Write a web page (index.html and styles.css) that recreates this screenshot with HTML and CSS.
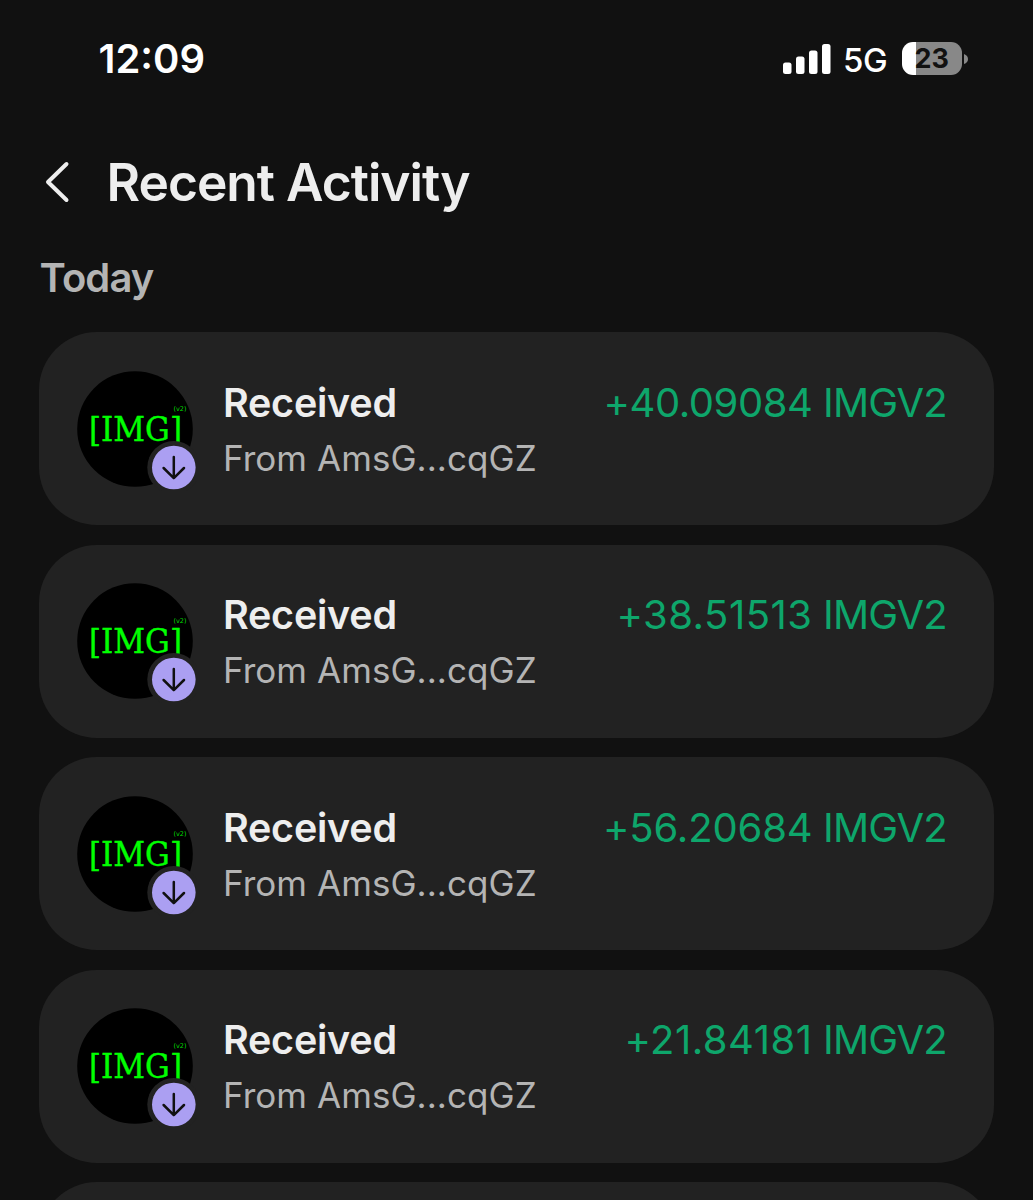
FILE: index.html
```html
<!DOCTYPE html>
<html lang="en">
<head>
<meta charset="utf-8">
<title>Recent Activity</title>
<link rel="stylesheet" href="styles.css">
</head>
<body>
<header class="status">
  <span class="time">12:09</span>
  <div class="indicators">
    <svg class="signal" width="48" height="30" viewBox="0 0 48 30" fill="#fff">
      <rect x="0" y="18.5" width="8.5" height="11.5" rx="2.5"/>
      <rect x="13" y="12.5" width="8.5" height="17.5" rx="2.5"/>
      <rect x="26" y="6.5" width="8.5" height="23.5" rx="2.5"/>
      <rect x="39" y="0" width="8.5" height="30" rx="2.5"/>
    </svg>
    <span class="network">5G</span>
    <div class="battery"><span class="level">23</span></div>
    <svg class="tip" width="4" height="10" viewBox="0 0 4 10"><path d="M0 0Q4 1.500 4 5T0 10Z" fill="#888"/></svg>
  </div>
</header>
<div class="heading">
  <svg class="back" width="26" height="42" viewBox="0 0 26 42"><path d="M22.500 3L4 21l18.500 18" fill="none" stroke="#eee" stroke-width="4" stroke-linecap="round" stroke-linejoin="round"/></svg>
  <h1>Recent Activity</h1>
</div>
<h2>Today</h2>
<main class="list">
  <article class="card">
    <svg class="avatar" viewBox="0 0 120 120">
      <circle cx="58" cy="58" r="57.8" fill="#000"/>
      <text class="token-name" x="12" y="69.500" textLength="93" lengthAdjust="spacingAndGlyphs">[IMG]</text>
      <text class="token-version" x="96.500" y="40" textLength="13" lengthAdjust="spacingAndGlyphs">(v2)</text>
      <circle cx="96.800" cy="96.500" r="26.500" fill="#222"/>
      <circle cx="96.800" cy="96.500" r="21.800" fill="#ab9ff2"/>
      <path class="arrow" d="M96.800 86v21M86.600 97l10.200 10.200 10.200-10.200"/>
    </svg>
    <div class="details"><div class="kind">Received</div><div class="from">From AmsG...cqGZ</div></div>
    <div class="amount"><span class="tight">+40.09084</span> IMGV2</div>
  </article>
  <article class="card">
    <svg class="avatar" viewBox="0 0 120 120">
      <circle cx="58" cy="58" r="57.8" fill="#000"/>
      <text class="token-name" x="12" y="69.500" textLength="93" lengthAdjust="spacingAndGlyphs">[IMG]</text>
      <text class="token-version" x="96.500" y="40" textLength="13" lengthAdjust="spacingAndGlyphs">(v2)</text>
      <circle cx="96.800" cy="96.500" r="26.500" fill="#222"/>
      <circle cx="96.800" cy="96.500" r="21.800" fill="#ab9ff2"/>
      <path class="arrow" d="M96.800 86v21M86.600 97l10.200 10.200 10.200-10.200"/>
    </svg>
    <div class="details"><div class="kind">Received</div><div class="from">From AmsG...cqGZ</div></div>
    <div class="amount"><span class="loose">+38.51513</span> IMGV2</div>
  </article>
  <article class="card">
    <svg class="avatar" viewBox="0 0 120 120">
      <circle cx="58" cy="58" r="57.8" fill="#000"/>
      <text class="token-name" x="12" y="69.500" textLength="93" lengthAdjust="spacingAndGlyphs">[IMG]</text>
      <text class="token-version" x="96.500" y="40" textLength="13" lengthAdjust="spacingAndGlyphs">(v2)</text>
      <circle cx="96.800" cy="96.500" r="26.500" fill="#222"/>
      <circle cx="96.800" cy="96.500" r="21.800" fill="#ab9ff2"/>
      <path class="arrow" d="M96.800 86v21M86.600 97l10.200 10.200 10.200-10.200"/>
    </svg>
    <div class="details"><div class="kind">Received</div><div class="from">From AmsG...cqGZ</div></div>
    <div class="amount"><span class="even">+56.20684</span> IMGV2</div>
  </article>
  <article class="card">
    <svg class="avatar" viewBox="0 0 120 120">
      <circle cx="58" cy="58" r="57.8" fill="#000"/>
      <text class="token-name" x="12" y="69.500" textLength="93" lengthAdjust="spacingAndGlyphs">[IMG]</text>
      <text class="token-version" x="96.500" y="40" textLength="13" lengthAdjust="spacingAndGlyphs">(v2)</text>
      <circle cx="96.800" cy="96.500" r="26.500" fill="#222"/>
      <circle cx="96.800" cy="96.500" r="21.800" fill="#ab9ff2"/>
      <path class="arrow" d="M96.800 86v21M86.600 97l10.200 10.200 10.200-10.200"/>
    </svg>
    <div class="details"><div class="kind">Received</div><div class="from">From AmsG...cqGZ</div></div>
    <div class="amount"><span class="loose">+21.84181</span> IMGV2</div>
  </article>
  <article class="card"></article>
</main>
</body>
</html>
```
FILE: styles.css
```css
* { box-sizing: border-box; }
body {
  margin: 0;
  height: 1200px;
  overflow: hidden;
  background: #111;
  color: #eee;
  font-family: Inter, "Liberation Sans", sans-serif;
  white-space: nowrap;
}
.status {
  display: flex;
  justify-content: space-between;
  align-items: center;
  height: 117px;
  padding: 0 65px 0 98.5px;
  color: #fff;
}
.time { font-size: 40px; font-weight: 600; line-height: 50px; }
.indicators { display: flex; align-items: center; }
.network { margin: 3px 14px 0 12.5px; font-size: 33px; font-weight: 500; line-height: 40px; letter-spacing: -.3px; }
.battery {
  width: 60.5px;
  height: 33px;
  border-radius: 11px;
  background: linear-gradient(90deg, #fff 14px, #888 14px);
  text-align: center;
}
.level { display: block; color: #111; font-size: 27px; font-weight: 700; line-height: 34px; }
.tip { margin-left: 2px; }
.heading { display: flex; align-items: center; height: 129px; margin-bottom: 2px; padding-left: 44px; }
h1 { margin: 0 0 0 36.5px; font-size: 51.5px; font-weight: 600; line-height: 64px; letter-spacing: -1px; }
h2 { margin: 0; padding-left: 39.5px; color: #b4b4b4; font-size: 40px; font-weight: 600; line-height: 59px; letter-spacing: -.9px; }
.list { display: flex; flex-direction: column; gap: 19.6px; padding: 25px 39px 0; }
.card {
  display: flex;
  flex: none;
  height: 193px;
  padding: 38.5px 47px 0 38px;
  border-radius: 58px;
  background: #222;
}
.avatar { flex: none; width: 120px; height: 120px; }
.token-name { fill: #0f0; stroke: #0f0; stroke-width: .4px; font-family: "DejaVu Serif", serif; font-size: 34px; }
.token-version { fill: #0d0; font-family: "DejaVu Sans", sans-serif; font-size: 6.5px; }
.arrow { fill: none; stroke: #111; stroke-width: 2.5px; stroke-linecap: round; stroke-linejoin: round; }
.details { flex: 1; padding: 7px 0 0 26px; }
.kind { font-size: 39.5px; font-weight: 600; line-height: 50px; letter-spacing: -.25px; }
.from { color: #b4b4b4; font-size: 35px; line-height: 60px; letter-spacing: .05px; }
.amount { padding-top: 7px; color: #0ea66b; font-size: 40px; line-height: 50px; letter-spacing: -.75px; }
.tight { letter-spacing: -.45px; }
.even { letter-spacing: -.15px; }
.loose { letter-spacing: .5px; }
```
